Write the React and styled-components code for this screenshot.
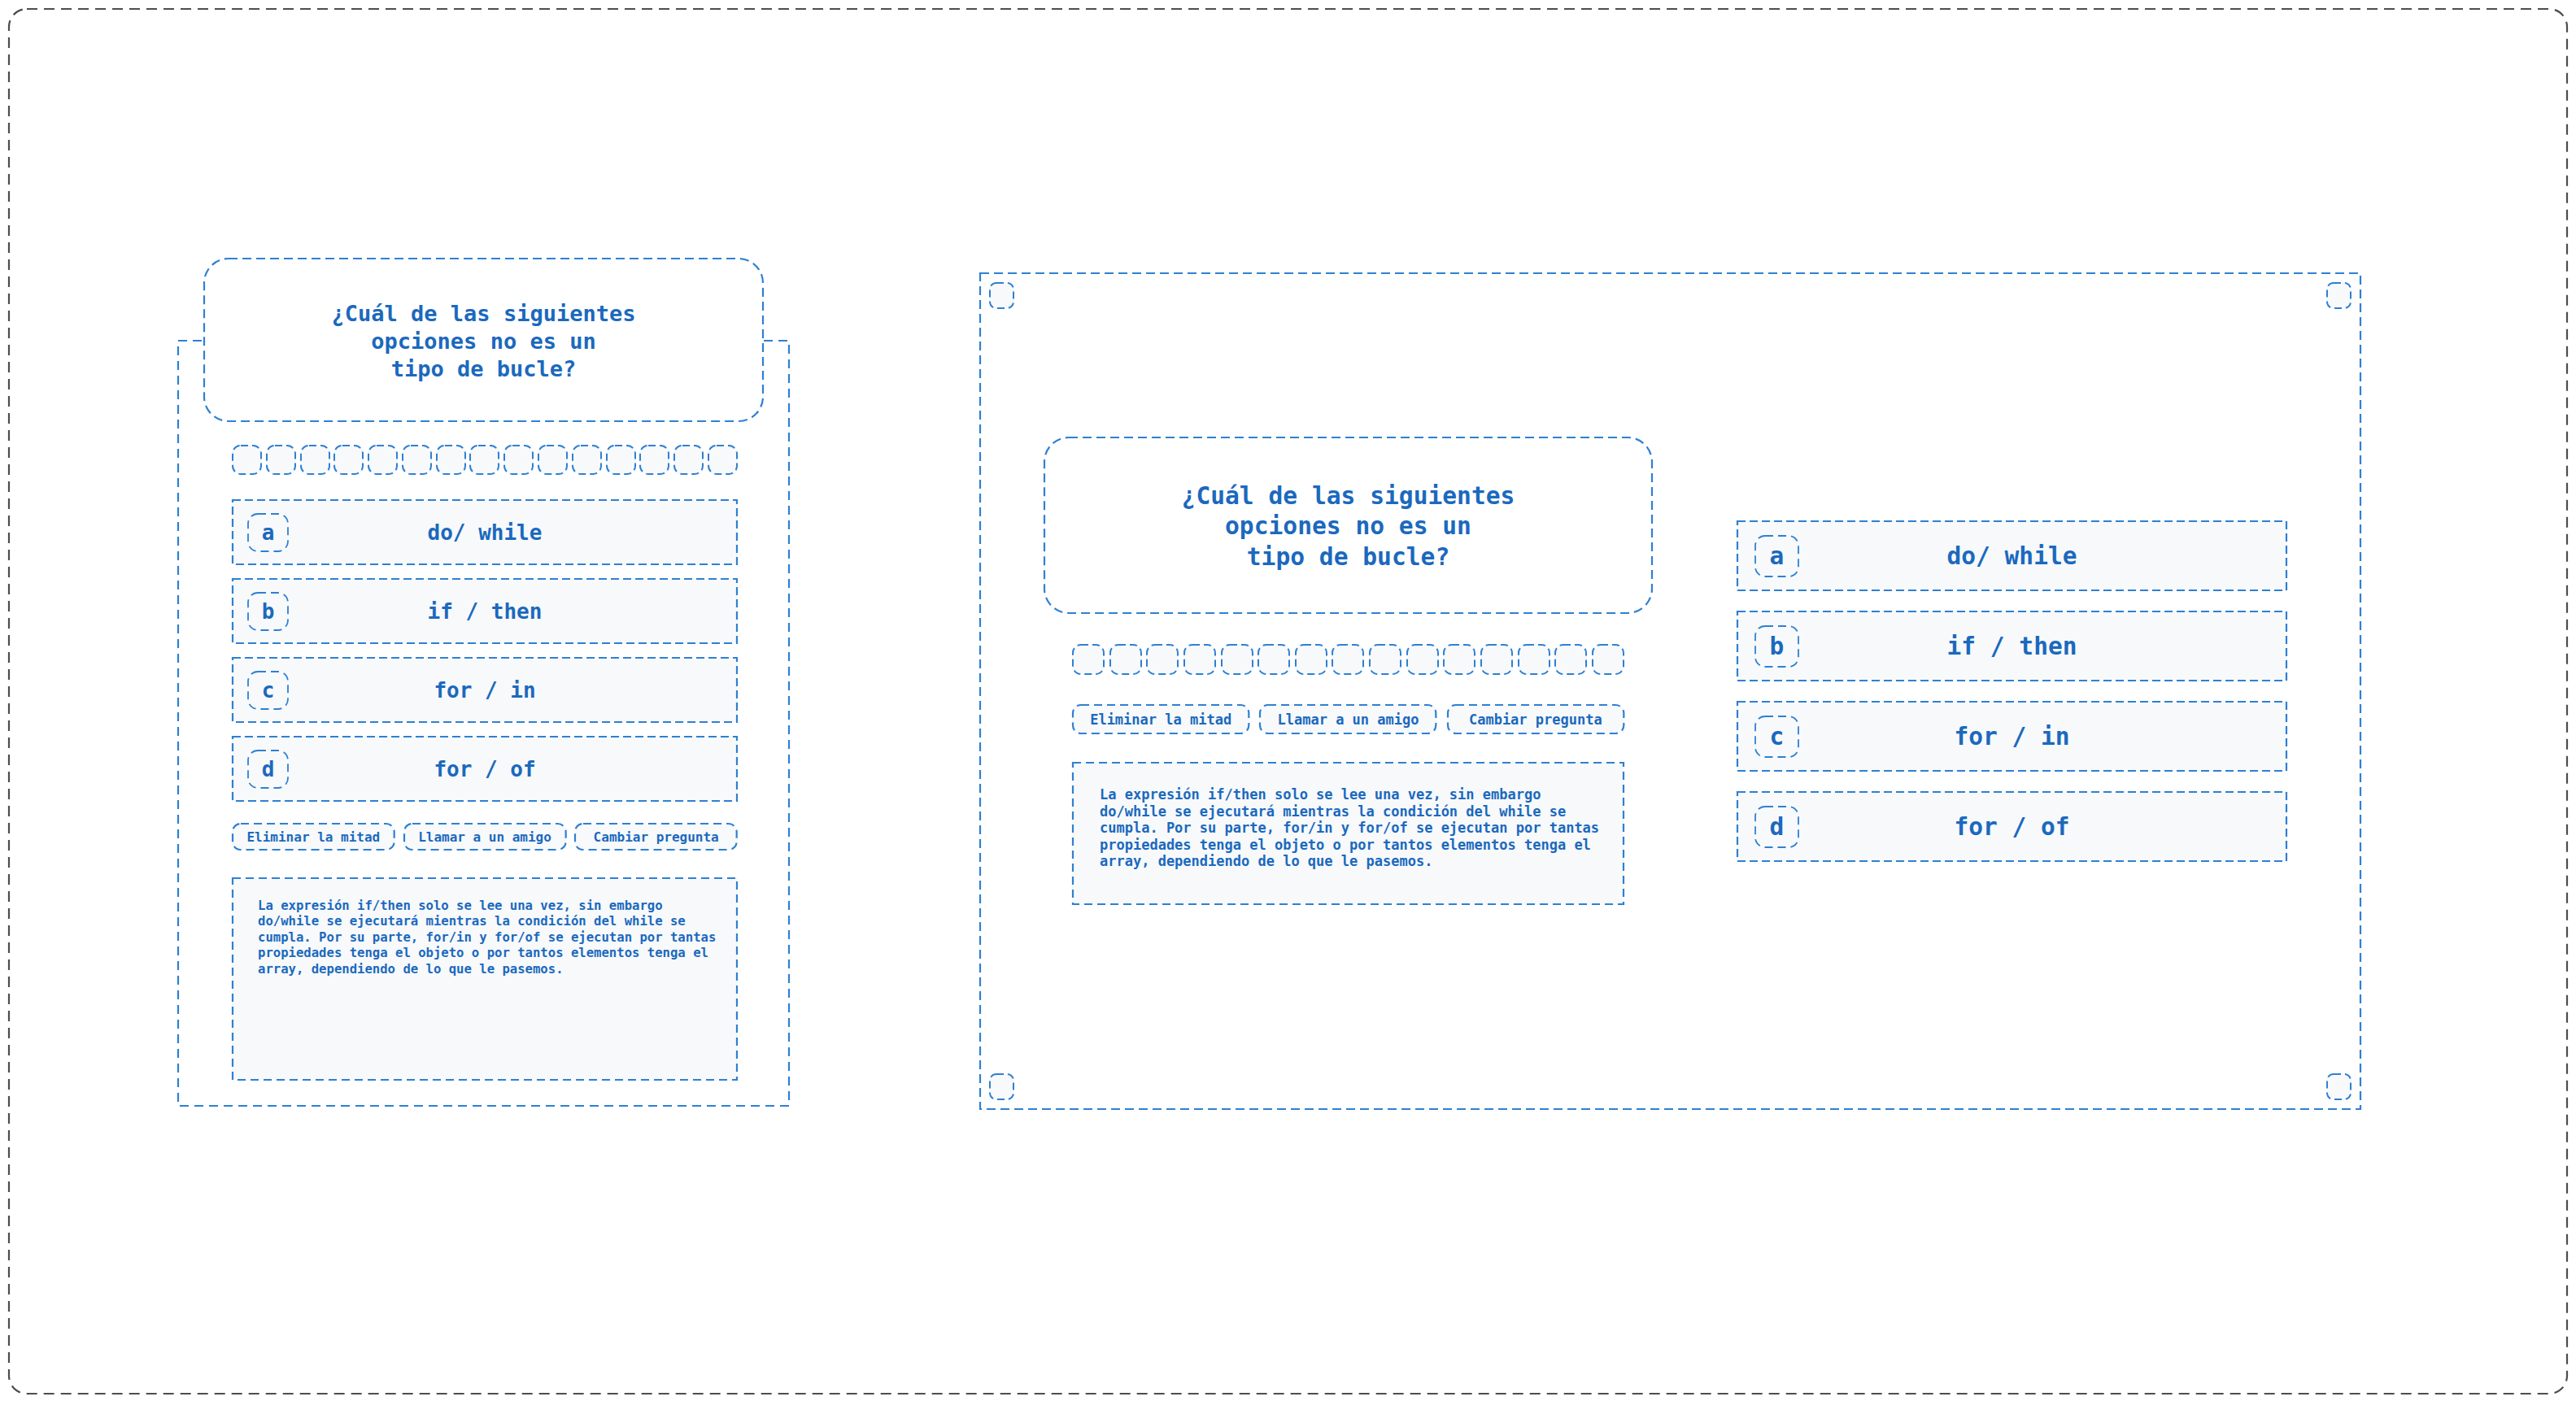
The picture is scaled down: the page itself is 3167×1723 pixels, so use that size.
import styled, { createGlobalStyle } from 'styled-components';

const BLUE = '#2f80d2';
const INK = '#1b69bd';
const FILL = '#f7f9fb';

const GlobalStyle = createGlobalStyle`
  html, body {
    margin: 0;
    padding: 0;
    background: #ffffff;
  }
  body {
    font-family: "DejaVu Sans Mono", "Liberation Mono", monospace;
    color: ${INK};
  }
  * {
    box-sizing: border-box;
  }
`;

const OutlineSvg = styled.svg`
  position: absolute;
  inset: 0;
  width: 100%;
  height: 100%;
  overflow: visible;
  pointer-events: none;
`;

const OutlineRect = styled.rect`
  width: calc(100% - 2px);
  height: calc(100% - 2px);
  fill: none;
`;

// sketchy dashed border drawn over a box
function Outline({ radius = 0, color = BLUE, dash = '10 6', stroke = 2.2 }) {
  return (
    <OutlineSvg aria-hidden="true">
      <OutlineRect
        x="1"
        y="1"
        rx={radius}
        ry={radius}
        stroke={color}
        strokeWidth={stroke}
        strokeDasharray={dash}
      />
    </OutlineSvg>
  );
}

const Page = styled.div`
  width: 3167px;
  height: 1723px;
  padding: 10px;
`;

const Frame = styled.div`
  position: relative;
  height: 1705px;
  display: flex;
  align-items: flex-start;
  padding: 307px 0 0 208px;
`;

/* ---------- mobile layout ---------- */

const PhonePanel = styled.section`
  position: relative;
  width: 753px;
  height: 943px;
  margin-top: 101px;
  padding: 0 64px 32px 67px;
  display: flex;
  flex-direction: column;
`;

const QuestionCard = styled.div`
  position: relative;
  background: #ffffff;
  display: flex;
  align-items: center;
  justify-content: center;
  text-align: center;
  font-weight: 700;
  font-size: ${(p) => p.$size}px;
  line-height: ${(p) => p.$lh}px;
  color: ${INK};
  height: ${(p) => p.$height}px;
  margin: ${(p) => p.$margin};
  padding-top: 4px;
`;

const Line = styled.span`
  display: block;
  white-space: pre;
`;

const Progress = styled.div`
  display: flex;
  justify-content: space-between;
  margin-top: ${(p) => p.$top}px;
`;

const Step = styled.div`
  position: relative;
  width: ${(p) => p.$w}px;
  height: ${(p) => p.$h}px;
  background: ${FILL};
  border-radius: 10px;
`;

const Options = styled.div`
  display: flex;
  flex-direction: column;
  gap: ${(p) => p.$gap}px;
  margin-top: ${(p) => p.$top}px;
`;

const Option = styled.div`
  position: relative;
  height: ${(p) => p.$h}px;
  background: ${FILL};
  display: grid;
  grid-template-columns: 1fr auto 1fr;
  align-items: center;
  padding: 0 ${(p) => p.$pad}px;
  font-weight: 700;
  font-size: ${(p) => p.$size}px;
`;

const Badge = styled.div`
  position: relative;
  justify-self: start;
  width: ${(p) => p.$s}px;
  height: ${(p) => p.$s - 3}px;
  display: flex;
  align-items: center;
  justify-content: center;
`;

const OptionText = styled.span`
  white-space: pre;
`;

const Lifelines = styled.div`
  display: flex;
  gap: ${(p) => p.$gap}px;
  margin-top: ${(p) => p.$top}px;
`;

const Lifeline = styled.button`
  position: relative;
  flex: 1;
  height: ${(p) => p.$h}px;
  border: none;
  background: ${FILL};
  border-radius: 10px;
  padding: 0;
  font-family: inherit;
  font-weight: 700;
  font-size: ${(p) => p.$size}px;
  color: ${INK};
  white-space: nowrap;
`;

const Explanation = styled.div`
  position: relative;
  background: ${FILL};
  margin-top: ${(p) => p.$top}px;
  padding: ${(p) => p.$pad};
  font-weight: 700;
  font-size: ${(p) => p.$size}px;
  line-height: ${(p) => p.$lh}px;
  ${(p) => (p.$grow ? 'flex: 1;' : `height: ${p.$h}px;`)}
`;

/* ---------- desktop layout ---------- */

const DesktopPanel = styled.section`
  position: relative;
  width: 1699px;
  height: 1030px;
  margin: 18px 0 0 233px;
  padding-left: 79px;
  display: flex;
  align-items: center;
  gap: 103px;
`;

const CornerDot = styled.div`
  position: absolute;
  width: 31px;
  height: 33px;
  background: ${FILL};
  border-radius: 8px;
  ${(p) => (p.$top ? 'top: 12px;' : 'bottom: 12px;')}
  ${(p) => (p.$left ? 'left: 12px;' : 'right: 12px;')}
`;

const LeftColumn = styled.div`
  width: 749px;
  margin-bottom: 50px;
  display: flex;
  flex-direction: column;
`;

const Inset = styled.div`
  padding: 0 35px;
  display: flex;
  flex-direction: column;
`;

const RightColumn = styled.div`
  width: 677px;
`;

const QUESTION = ['¿Cuál de las siguientes', 'opciones no es un', 'tipo de bucle?'];

const ANSWERS = [
  ['a', 'do/ while'],
  ['b', 'if / then'],
  ['c', 'for / in'],
  ['d', 'for / of'],
];

const HELPS = ['Eliminar la mitad', 'Llamar a un amigo', 'Cambiar pregunta'];

const EXPLANATION = [
  'La expresión if/then solo se lee una vez, sin embargo',
  'do/while se ejecutará mientras la condición del while se',
  'cumpla. Por su parte, for/in y for/of se ejecutan por tantas',
  'propiedades tenga el objeto o por tantos elementos tenga el',
  'array, dependiendo de lo que le pasemos.',
];

function Steps({ w, h, top }) {
  return (
    <Progress $top={top}>
      {Array.from({ length: 15 }, (_, i) => (
        <Step key={i} $w={w} $h={h}>
          <Outline radius={10} dash="9 5" stroke={2} />
        </Step>
      ))}
    </Progress>
  );
}

function AnswerList({ h, gap, top, size, pad, badge }) {
  return (
    <Options $gap={gap} $top={top}>
      {ANSWERS.map(([letter, text]) => (
        <Option key={letter} $h={h} $size={size} $pad={pad}>
          <Outline dash="10 5" />
          <Badge $s={badge}>
            <Outline radius={12} dash="10 6" stroke={1.8} />
            {letter}
          </Badge>
          <OptionText>{text}</OptionText>
        </Option>
      ))}
    </Options>
  );
}

function Helps({ h, gap, top, size }) {
  return (
    <Lifelines $gap={gap} $top={top}>
      {HELPS.map((label) => (
        <Lifeline key={label} $h={h} $size={size}>
          <Outline radius={10} dash="10 6" />
          {label}
        </Lifeline>
      ))}
    </Lifelines>
  );
}

export default function App() {
  return (
    <>
      <GlobalStyle />
      <Page>
        <Frame>
          <Outline radius={22} color="#4d4d4d" dash="13 8" />

          <PhonePanel>
            <Outline dash="11 7" />
            <QuestionCard $size={27} $lh={34} $height={202} $margin="-101px -32px 0 -35px">
              <Outline radius={30} dash="11 6" />
              <div>
                {QUESTION.map((l) => (
                  <Line key={l}>{l}</Line>
                ))}
              </div>
            </QuestionCard>
            <Steps w={37} h={37} top={28} />
            <AnswerList h={81} gap={16} top={30} size={26} pad={19} badge={51} />
            <Helps h={34} gap={10} top={26} size={16} />
            <Explanation $top={33} $pad="26px 20px 0 32px" $size={15.6} $lh={19.4} $grow>
              <Outline dash="10 6" />
              {EXPLANATION.map((l) => (
                <Line key={l}>{l}</Line>
              ))}
            </Explanation>
          </PhonePanel>

          <DesktopPanel>
            <Outline dash="11 6" />
            <CornerDot $top $left>
              <Outline radius={8} dash="9 5" stroke={2} />
            </CornerDot>
            <CornerDot $top>
              <Outline radius={8} dash="9 5" stroke={2} />
            </CornerDot>
            <CornerDot $left>
              <Outline radius={8} dash="9 5" stroke={2} />
            </CornerDot>
            <CornerDot>
              <Outline radius={8} dash="9 5" stroke={2} />
            </CornerDot>

            <LeftColumn>
              <QuestionCard $size={29.6} $lh={37.5} $height={218} $margin="0">
                <Outline radius={30} dash="11 6" />
                <div>
                  {QUESTION.map((l) => (
                    <Line key={l}>{l}</Line>
                  ))}
                </div>
              </QuestionCard>
              <Inset>
                <Steps w={40} h={38} top={37} />
                <Helps h={37} gap={12} top={36} size={17} />
                <Explanation $top={34} $pad="30px 20px 0 34px" $size={17} $lh={20.6} $h={176}>
                  <Outline dash="10 6" />
                  {EXPLANATION.map((l) => (
                    <Line key={l}>{l}</Line>
                  ))}
                </Explanation>
              </Inset>
            </LeftColumn>

            <RightColumn>
              <AnswerList h={87} gap={24} top={0} size={29.5} pad={22} badge={55} />
            </RightColumn>
          </DesktopPanel>
        </Frame>
      </Page>
    </>
  );
}
